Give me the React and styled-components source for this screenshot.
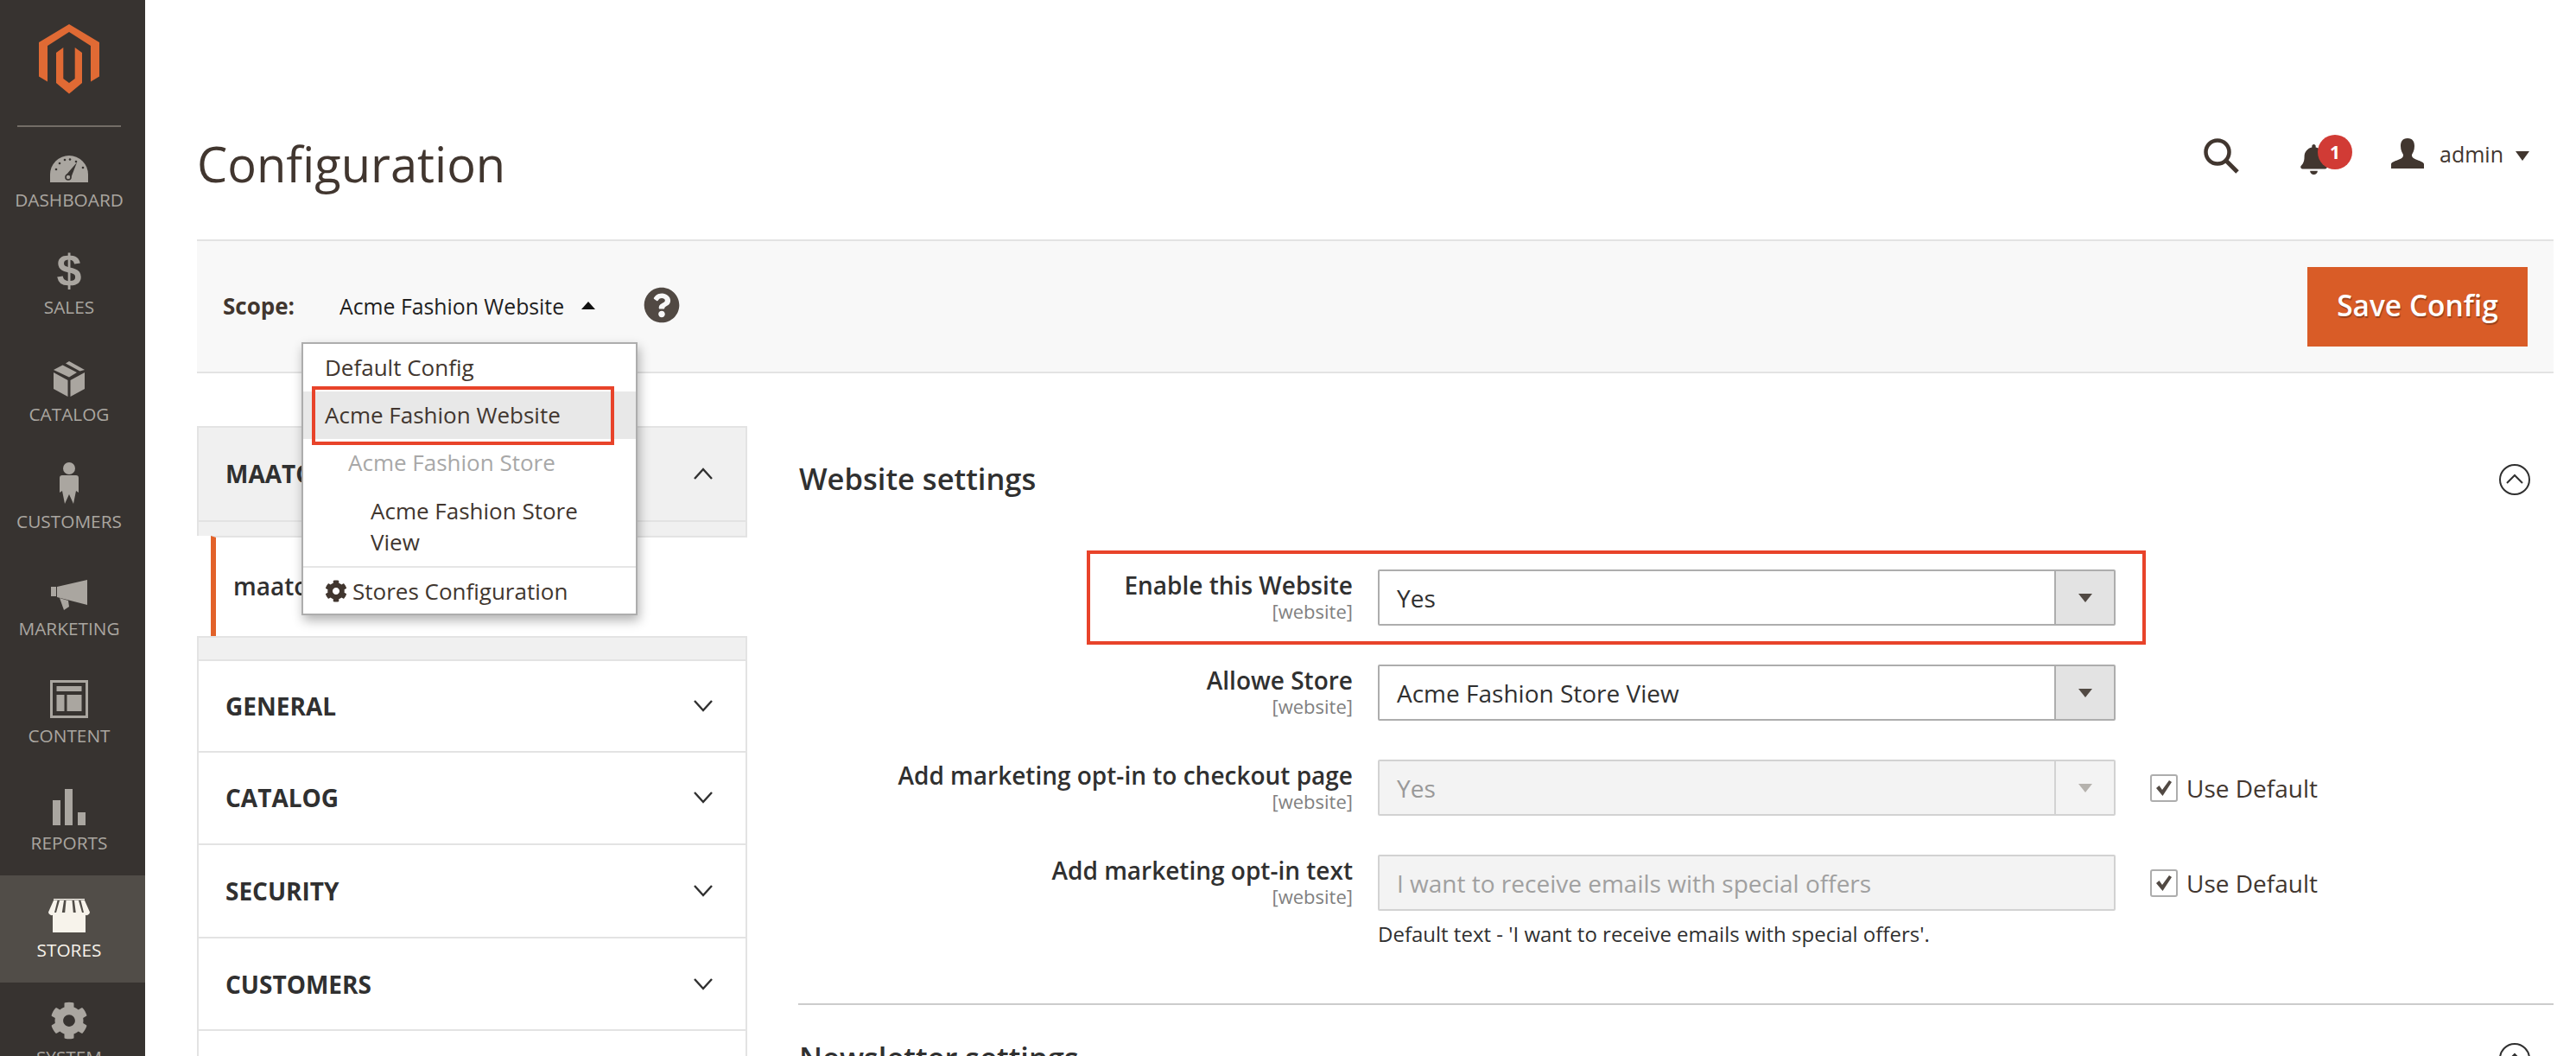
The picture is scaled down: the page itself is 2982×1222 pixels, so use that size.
import React from 'react';
import styled, { createGlobalStyle } from 'styled-components';
import { FaCog, FaBell, FaQuestionCircle } from 'react-icons/fa';

const GlobalStyle = createGlobalStyle`
  html, body {
    margin: 0;
    height: 100%;
    overflow: hidden;
    background: #fff;
    font-family: 'Open Sans', 'Liberation Sans', sans-serif;
    color: #303030;
  }
  * { box-sizing: border-box; }
`;

const Page = styled.div`
  display: flex;
  width: 2982px;
  height: 1222px;
  overflow: hidden;
`;

const Sidebar = styled.nav`
  flex: none;
  width: 168px;
  background: #373330;
  display: flex;
  flex-direction: column;
`;

const LogoBox = styled.div`
  height: 145px;
  padding: 28px 8px 0 0;
  display: flex;
  justify-content: center;
  flex: none;
`;

const NavDivider = styled.div`
  flex: none;
  height: 2px;
  margin: 0 28px -2px 20px;
  background: #736d66;
`;

const NavItem = styled.div`
  flex: none;
  height: 124px;
  padding-right: 8px;
  display: flex;
  flex-direction: column;
  align-items: center;
  background: ${(p) => (p.$active ? '#514d48' : 'transparent')};
  color: ${(p) => (p.$active ? '#f7f3eb' : '#aaa6a0')};
`;

const NavIcon = styled.div`
  height: 66px;
  display: flex;
  align-items: flex-end;
  justify-content: center;
`;

const NavLabel = styled.div`
  margin-top: 7px;
  font-size: 20.8px;
  line-height: 27px;
  white-space: nowrap;
`;

const Dollar = styled.span`
  font-family: 'Liberation Sans', sans-serif;
  font-weight: 700;
  font-size: 52px;
  line-height: 50px;
  margin-bottom: -3px;
`;

const Main = styled.main`
  flex: 1;
  min-width: 0;
  padding: 0 26px 0 60px;
`;

const Header = styled.header`
  height: 277px;
  display: flex;
  justify-content: space-between;
  align-items: flex-start;
`;

const Title = styled.h1`
  margin: 0;
  padding-top: 149px;
  font-size: 56px;
  line-height: 80px;
  font-weight: 400;
  color: #41362f;
`;

const Tools = styled.div`
  display: flex;
  align-items: flex-start;
  padding: 160px 28px 0 0;
  color: #41362f;
`;

const BellWrap = styled.div`
  position: relative;
  width: 62px;
  height: 44px;
  margin: -4px 0 0 69px;
  padding-top: 9px;
  font-size: 35px;
`;

const Badge = styled.span`
  position: absolute;
  left: 22px;
  top: 0;
  width: 40px;
  height: 40px;
  border-radius: 50%;
  background: #d13b35;
  color: #fff;
  font-size: 21px;
  font-weight: 700;
  line-height: 40px;
  text-align: center;
`;

const UserName = styled.span`
  margin: -2px 14px 0 18px;
  font-size: 25px;
  line-height: 40px;
`;

const Caret = styled.span`
  display: inline-block;
  flex: none;
  width: 0;
  height: 0;
  margin-top: ${(p) => p.$top || 0}px;
  border-left: ${(p) => p.$w || 8}px solid transparent;
  border-right: ${(p) => p.$w || 8}px solid transparent;
  ${(p) => (p.$up ? 'border-bottom' : 'border-top')}: ${(p) => p.$h || 10}px solid ${(p) => p.$color || '#41362f'};
`;

const ActionBar = styled.div`
  height: 155px;
  display: flex;
  justify-content: space-between;
  align-items: center;
  padding: 0 30px;
  background: #f8f8f8;
  border-top: 2px solid #e3e3e3;
  border-bottom: 2px solid #e3e3e3;
`;

const Scope = styled.div`
  position: relative;
  display: flex;
  align-items: center;
  margin-top: -2px;
  font-size: 24.8px;
`;

const ScopeLabel = styled.span`
  width: 135px;
  font-size: 26px;
  font-weight: 700;
  color: #41362f;
`;

const ScopeValue = styled.span`
  margin-right: 20px;
  color: #1f1f1f;
`;

const HelpIcon = styled.span`
  display: flex;
  margin: -2px 0 0 56px;
  font-size: 42px;
  color: #514943;
`;

const Dropdown = styled.div`
  position: absolute;
  z-index: 5;
  left: 91px;
  top: 62px;
  width: 389px;
  height: 316px;
  font-size: 26px;
  background: #fff;
  border: 2px solid #adadad;
  box-shadow: 2px 6px 12px rgba(0, 0, 0, 0.3);
  color: #41362f;
`;

const DropItem = styled.div`
  position: relative;
  height: 55px;
  padding: 0 10px 0 ${(p) => p.$indent || 25}px;
  line-height: 55px;
  background: ${(p) => (p.$active ? '#e8e8e8' : 'transparent')};
  color: ${(p) => (p.$muted ? '#a8a8a8' : '#41362f')};
`;

const DropWrapItem = styled.div`
  height: 92px;
  padding: 10px 10px 0 78px;
  line-height: 36px;
`;

const DropFooter = styled.div`
  display: flex;
  align-items: center;
  gap: 6px;
  height: 56px;
  padding-left: 25px;
  border-top: 2px solid #e6e6e6;
`;

const Callout = styled.span`
  position: absolute;
  pointer-events: none;
  left: ${(p) => p.$left}px;
  top: ${(p) => p.$top}px;
  width: ${(p) => p.$width}px;
  height: ${(p) => p.$height}px;
  border: 4px solid #e8432a;
`;

const SaveButton = styled.button`
  width: 255px;
  height: 92px;
  border: 0;
  padding: 0 0 3px;
  background: #d95c27;
  color: #fff;
  font-family: inherit;
  font-size: 33.5px;
  font-weight: 600;
  text-shadow: 1px 2px 1px rgba(0, 0, 0, 0.3);
`;

const Columns = styled.div`
  display: flex;
  gap: 59px;
  padding-top: 61px;
`;

const ConfigNav = styled.aside`
  flex: none;
  width: 637px;
`;

const NavHead = styled.div`
  height: 111px;
  display: flex;
  align-items: center;
  justify-content: space-between;
  padding: 0 38px 2px 31px;
  background: #f0f0f0;
  border: 2px solid #e3e3e3;
  font-size: 28px;
  font-weight: 700;
`;

const SubBand = styled.div`
  height: 16px;
  background: #f0f0f0;
  border-right: 2px solid #e3e3e3;
  border-left: 2px solid #e3e3e3;
`;

const SubItem = styled.div`
  height: 116px;
  margin-left: 16px;
  padding: 0 0 2px 20px;
  display: flex;
  align-items: center;
  border-left: 6px solid #e2622a;
  border-top: 2px solid #e3e3e3;
  font-size: 28px;
  font-weight: 600;
`;

const NavBand = styled.div`
  height: 27px;
  background: #f0f0f0;
  border: 2px solid #e3e3e3;
  border-bottom: 0;
`;

const NavRow = styled.div`
  height: 107.6px;
  display: flex;
  align-items: center;
  justify-content: space-between;
  padding: 0 38px 0 31px;
  border: 2px solid #e3e3e3;
  border-width: ${(p) => (p.$first ? '2px' : '0 2px 2px')};
  font-size: 28px;
  font-weight: 700;
`;

const Content = styled.section`
  flex: 1;
  min-width: 0;
`;

const SectionHead = styled.div`
  height: 124px;
  display: flex;
  align-items: center;
  justify-content: space-between;
  padding: 0 27px 0 1px;
`;

const SectionTitle = styled.h2`
  margin: -3px 0 0;
  font-size: 34.5px;
  font-weight: 600;
  color: #303030;
`;

const Fields = styled.div`
  display: flex;
  flex-direction: column;
  gap: 45px;
  padding-top: 42px;
`;

const Field = styled.div`
  position: relative;
  display: grid;
  grid-template-columns: 642px 854px auto;
  column-gap: 29px;
`;

const FieldLabel = styled.div`
  text-align: right;
  padding-top: 3px;
`;

const LabelText = styled.div`
  font-size: 28px;
  line-height: 30px;
  font-weight: 600;
  color: #303030;
`;

const LabelScope = styled.div`
  font-size: 22px;
  line-height: 30px;
  color: #808080;
`;

const Select = styled.div`
  height: 65px;
  display: flex;
  align-items: center;
  justify-content: space-between;
  padding-left: 20px;
  font-size: 28px;
  background: ${(p) => (p.$disabled ? '#f3f3f3' : '#fff')};
  color: ${(p) => (p.$disabled ? '#999' : '#303030')};
  border: 2px solid ${(p) => (p.$disabled ? '#d2d2d2' : '#adadad')};
  border-radius: 2px;
`;

const SelectButton = styled.span`
  flex: none;
  width: 69px;
  height: 100%;
  display: flex;
  align-items: center;
  justify-content: center;
  background: ${(p) => (p.$disabled ? '#f3f3f3' : '#e3e3e3')};
  border-left: 2px solid ${(p) => (p.$disabled ? '#d2d2d2' : '#adadad')};
`;

const InputBox = styled(Select)`
  color: #a0a0a0;
`;

const Note = styled.div`
  grid-column: 2 / 4;
  margin-top: 12px;
  font-size: 24px;
  line-height: 30px;
  color: #303030;
`;

const UseDefault = styled.label`
  display: flex;
  align-items: center;
  margin-left: 11px;
  gap: 10px;
  font-size: 28px;
  height: 65px;
  color: #41362f;
`;

const CheckBox = styled.span`
  width: 32px;
  height: 32px;
  display: flex;
  align-items: center;
  justify-content: center;
  border: 2px solid #adadad;
  border-radius: 3px;
  background: #fff;
`;

const Divider = styled.hr`
  margin: 65px 0 0;
  border: 0;
  height: 2px;
  background: #ccc;
`;

const Logo = () => (
  <svg width="70" height="81" viewBox="0 0 70 81" fill="#e06a34">
    <polygon points="35,0 70,21 70,60.5 60,66.5 60,25 35,9 10,25 10,66.5 0,60.5 0,21" />
    <polygon points="20,33 28.3,27 28.3,63 35,68 41.7,63 41.7,27 50,33 50,68 35,80.5 20,68" />
  </svg>
);

const GaugeIcon = () => (
  <svg width="44" height="31" viewBox="0 0 44 31">
    <path d="M0 31V22A22 22 0 0 1 44 22V31Z" fill="currentColor" />
    <g fill="#373330">
      <circle cx="7" cy="16" r="1.3" />
      <circle cx="11" cy="9" r="1.3" />
      <circle cx="17" cy="5" r="1.3" />
      <circle cx="23" cy="4.5" r="1.3" />
      <circle cx="30" cy="7" r="1.3" />
      <circle cx="38" cy="14" r="1.3" />
    </g>
    <path d="M18 23L31 8L24 26Z" fill="#373330" />
    <circle cx="21" cy="25" r="3" fill="currentColor" stroke="#373330" strokeWidth="1.6" />
  </svg>
);

const BoxIcon = () => (
  <svg width="36" height="41" viewBox="0 0 36 41" fill="currentColor">
    <polygon points="0,13 16.5,22 16.5,41 0,32" />
    <polygon points="36,13 19.5,22 19.5,41 36,32" />
    <polygon points="0,10 10.5,4.5 27,13 18,18.5" />
    <polygon points="14,2.5 18,0 36,10 30.5,11.5" />
  </svg>
);

const PersonIcon = () => (
  <svg width="22" height="48" viewBox="0 0 22 48" fill="currentColor">
    <circle cx="11" cy="7" r="7" />
    <path d="M3 15H19Q22 15 22 18V35L19 33L16 48L11 37L6 48L3 33L0 35V18Q0 15 3 15Z" />
  </svg>
);

const MegaphoneIcon = () => (
  <svg width="42" height="36" viewBox="0 0 42 36" fill="currentColor">
    <polygon points="0,8 6,8 6,19 0,19" />
    <polygon points="7,8 42,0 42,29 7,20" />
    <polygon points="10,21 20,24 21,31 15,35" />
  </svg>
);

const ContentIcon = () => (
  <svg width="44" height="44" viewBox="0 0 44 44" fill="currentColor">
    <path d="M0 0H44V44H0ZM3 3V41H41V3Z" fillRule="evenodd" />
    <rect x="7.5" y="7" width="29" height="6" />
    <rect x="7.5" y="17" width="9" height="19" />
    <rect x="19.5" y="17" width="17" height="19" />
  </svg>
);

const BarsIcon = () => (
  <svg width="38" height="42" viewBox="0 0 38 42" fill="currentColor">
    <rect x="0" y="13" width="9" height="29" />
    <rect x="14" y="0" width="9" height="42" />
    <rect x="29" y="27" width="9" height="15" />
  </svg>
);

const StoreIcon = () => (
  <svg width="48" height="39" viewBox="0 0 48 39" fill="currentColor">
    <path d="M5 16H43V39H5Z" />
    <path d="M6 0H42V1.5H6Z" />
    <path d="M6 2H10.5L6.5 18Q4 20 2 18.5Q0 17.5 0 15.5Z" />
    <path d="M13 2H18L15.5 18Q13 20 11 18.5Q9 17.5 9 16Z" />
    <path d="M20.5 2H27.5L29 18Q26 20 24 18.5Q21 20 19 18Z" />
    <path d="M30 2H35L39 16Q39 18 36.5 18.5Q34 20 32 18Z" />
    <path d="M37.5 2H42L48 15.5Q48 17.5 46 18.5Q44 20 41.5 18Z" />
  </svg>
);

const SearchIcon = () => (
  <svg width="41" height="41" viewBox="0 0 41 41" fill="none" stroke="currentColor">
    <circle cx="16" cy="16" r="13.5" strokeWidth="4.5" />
    <path d="M26 26L39 39" strokeWidth="5" />
  </svg>
);

const UserIcon = () => (
  <svg width="38" height="35" viewBox="0 0 38 35" fill="currentColor" style={{ marginLeft: 45 }}>
    <path d="M19 0C25 0 27 4 27 9C27 14 25 17 24 19C24 22 25 23 30 25C35 27 38 28 38 30V35H0V30C0 28 3 27 8 25C13 23 14 22 14 19C13 17 11 14 11 9C11 4 13 0 19 0Z" />
  </svg>
);

const Chevron = ({ up }) => (
  <svg width="22" height="14" viewBox="0 0 22 14" fill="none" stroke="#303030" strokeWidth="2.4">
    <path d={up ? 'M1 13L11 2L21 13' : 'M1 1L11 12L21 1'} />
  </svg>
);

const CircleChevron = () => (
  <svg width="36" height="36" viewBox="0 0 36 36" fill="none" stroke="#303030" strokeWidth="2">
    <circle cx="18" cy="18" r="17" />
    <path d="M9 22L18 13L27 22" />
  </svg>
);

const Tick = () => (
  <svg width="20" height="18" viewBox="0 0 20 18" fill="#514943">
    <path d="M1 9L4.5 6L8 11L16 0L19 2L8.5 18Z" />
  </svg>
);

const navItems = [
  { label: 'DASHBOARD', icon: <GaugeIcon /> },
  { label: 'SALES', icon: <Dollar>$</Dollar> },
  { label: 'CATALOG', icon: <BoxIcon /> },
  { label: 'CUSTOMERS', icon: <PersonIcon /> },
  { label: 'MARKETING', icon: <MegaphoneIcon /> },
  { label: 'CONTENT', icon: <ContentIcon /> },
  { label: 'REPORTS', icon: <BarsIcon /> },
  { label: 'STORES', icon: <StoreIcon />, active: true },
  { label: 'SYSTEM', icon: <FaCog size={44} /> },
];

const sections = ['GENERAL', 'CATALOG', 'SECURITY', 'CUSTOMERS'];

const App = () => (
  <Page>
    <GlobalStyle />
    <Sidebar>
      <LogoBox>
        <Logo />
      </LogoBox>
      <NavDivider />
      {navItems.map((item) => (
        <NavItem key={item.label} $active={item.active}>
          <NavIcon>{item.icon}</NavIcon>
          <NavLabel>{item.label}</NavLabel>
        </NavItem>
      ))}
    </Sidebar>

    <Main>
      <Header>
        <Title>Configuration</Title>
        <Tools>
          <SearchIcon />
          <BellWrap>
            <FaBell />
            <Badge>1</Badge>
          </BellWrap>
          <UserIcon />
          <UserName>admin</UserName>
          <Caret $w={8} $h={11} $top={15} />
        </Tools>
      </Header>

      <ActionBar>
        <Scope>
          <ScopeLabel>Scope:</ScopeLabel>
          <ScopeValue>Acme Fashion Website</ScopeValue>
          <Caret $up $w={8} $h={9} $color="#111" />
          <HelpIcon>
            <FaQuestionCircle />
          </HelpIcon>
          <Dropdown>
            <DropItem>Default Config</DropItem>
            <DropItem $active>
              Acme Fashion Website
              <Callout $left={10} $top={-6} $width={350} $height={68} />
            </DropItem>
            <DropItem $muted $indent={52}>Acme Fashion Store</DropItem>
            <DropWrapItem>Acme Fashion Store View</DropWrapItem>
            <DropFooter>
              <FaCog size={26} />
              Stores Configuration
            </DropFooter>
          </Dropdown>
        </Scope>
        <SaveButton type="button">Save Config</SaveButton>
      </ActionBar>

      <Columns>
        <ConfigNav>
          <NavHead>
            MAATOO
            <Chevron up />
          </NavHead>
          <SubBand />
          <SubItem>maatoo</SubItem>
          <NavBand />
          {sections.map((name, i) => (
            <NavRow key={name} $first={i === 0}>
              {name}
              <Chevron />
            </NavRow>
          ))}
          <NavRow />
        </ConfigNav>

        <Content>
          <SectionHead>
            <SectionTitle>Website settings</SectionTitle>
            <CircleChevron />
          </SectionHead>
          <Fields>
            <Field>
              <Callout $left={334} $top={-22} $width={1226} $height={109} />
              <FieldLabel>
                <LabelText>Enable this Website</LabelText>
                <LabelScope>[website]</LabelScope>
              </FieldLabel>
              <Select>
                Yes
                <SelectButton><Caret $w={8} $h={10} $color="#514943" /></SelectButton>
              </Select>
            </Field>
            <Field>
              <FieldLabel>
                <LabelText>Allowe Store</LabelText>
                <LabelScope>[website]</LabelScope>
              </FieldLabel>
              <Select>
                Acme Fashion Store View
                <SelectButton><Caret $w={8} $h={10} $color="#514943" /></SelectButton>
              </Select>
            </Field>
            <Field>
              <FieldLabel>
                <LabelText>Add marketing opt-in to checkout page</LabelText>
                <LabelScope>[website]</LabelScope>
              </FieldLabel>
              <Select $disabled>
                Yes
                <SelectButton $disabled><Caret $w={8} $h={10} $color="#b5b2ad" /></SelectButton>
              </Select>
              <UseDefault>
                <CheckBox><Tick /></CheckBox>
                Use Default
              </UseDefault>
            </Field>
            <Field>
              <FieldLabel>
                <LabelText>Add marketing opt-in text</LabelText>
                <LabelScope>[website]</LabelScope>
              </FieldLabel>
              <InputBox $disabled>I want to receive emails with special offers</InputBox>
              <UseDefault>
                <CheckBox><Tick /></CheckBox>
                Use Default
              </UseDefault>
              <span />
              <Note>Default text - 'I want to receive emails with special offers'.</Note>
            </Field>
          </Fields>
          <Divider />
          <SectionHead>
            <SectionTitle>Newsletter settings</SectionTitle>
            <CircleChevron />
          </SectionHead>
        </Content>
      </Columns>
    </Main>
  </Page>
);

export default App;
